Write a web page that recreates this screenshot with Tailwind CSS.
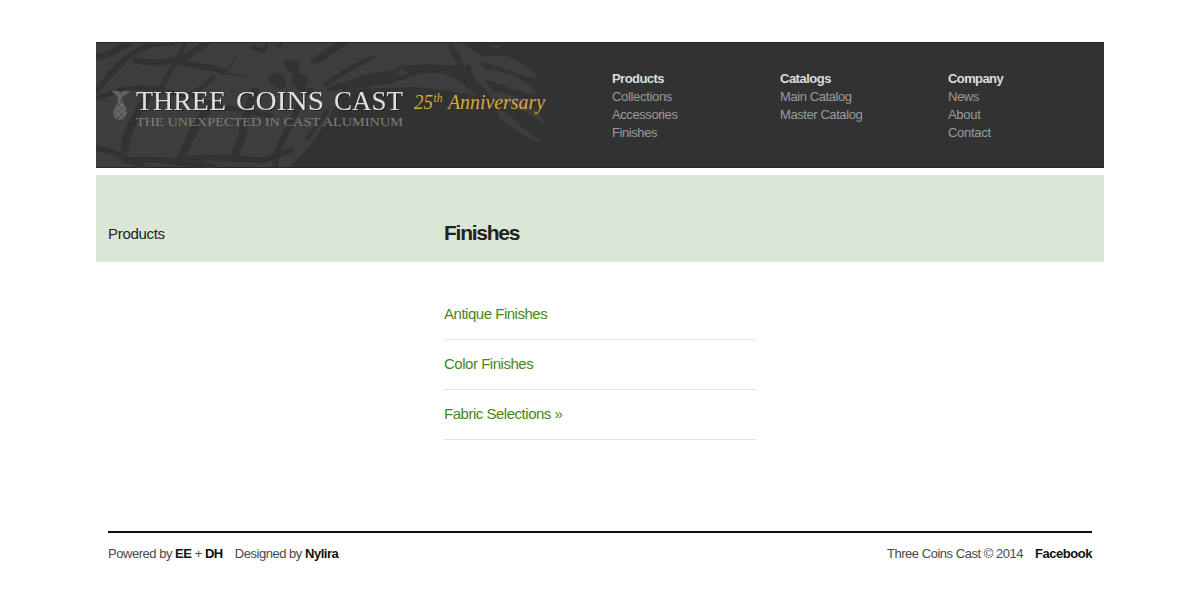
<!DOCTYPE html>
<html lang="en">
<head>
<meta charset="utf-8">
<title>Finishes - Three Coins Cast</title>
<script src="https://cdn.jsdelivr.net/npm/@tailwindcss/browser@4"></script>
</head>
<body class="h-[600px] overflow-hidden bg-white font-['Liberation_Sans',Arial,sans-serif] text-[#222]">
<div class="mx-auto w-[1008px] pt-[42px]">
  <header class="flex h-[126px] border-y border-[#272727] bg-[#323232]">
    <a href="#" class="-mt-px block h-[126px] w-[516px] shrink-0">
      <svg viewBox="0 0 516 126" class="block h-[126px] w-[516px]" font-family="'Liberation Serif', serif">
        <g fill="#3d3d3d">
          <path d="M0 1H240L262 20L242 34L247 46L236 70L224 90L212 106L194 125H0Z"/>
          <path d="M205 1H354L365 12L372 20L366 31L350 27L330 26L308 28L284 34L254 43L238 48L226 30Z"/>
          <path d="M254 48L298 41L310 34L328 31L345 31L358 36L372 46L382 54L350 48L320 45L288 46Z"/>
          <path d="M356 1H366L377 9L388 14H398L411 14L424 20L435 27L443 37L428 34L411 28L394 22L383 20L389 27L402 29L420 34L435 45L442 53L430 51L411 45L388 37L397 50L402 61L388 52L380 41L374 24Z"/>
          <path d="M389 3L405 4L400 6ZM391 49L407 51L427 57L438 66L452 83L444 79L432 71L413 64ZM400 67L412 72L427 86L440 96L446 98L443 101L435 98L417 86L405 78Z"/>
        </g>
        <g fill="none" stroke="#323232">
          <path stroke-width="6" d="M0 15Q14 13 24 6L36 1M0 50Q20 23 38 11T78 1M37 18Q60 24 87 16L112 1M81 18Q95 24 111 25Q124 27 129 31"/>
          <path stroke-width="5" d="M0 57Q29 44 49 46T92 55M92 53Q105 48 119 34M96 54Q119 65 139 67T177 75M62 50L82 17L89 1"/>
          <path stroke-width="8" d="M55 50Q42 66 31 94L28 111M117 61Q96 85 84 119M160 46Q150 68 146 95L136 120"/>
          <path stroke-width="6" d="M0 106Q17 109 30 117L49 125M28 119Q50 116 73 119T120 125M81 119Q108 114 133 116T168 118L198 107M206 58Q194 82 181 110L179 125"/>
          <path stroke-width="1.6" d="M130 33L140 14M130 32L151 34"/>
          <path stroke-width="4" d="M228 43Q247 30 280 14M155 5L167 9L171 3M180 4L186 1M210 98L232 68"/>
        </g>
        <g fill="#323232">
          <path d="M172 36Q179 28 186 33Q190 37 190 46L185 47Q175 45 172 36ZM187 20L191 17L194 19L202 18Q206 25 201 30L211 34Q213 42 208 46L218 47L219 52Q207 53 202 48L195 40L198 34L191 28Z"/>
          <path d="M214 22L216 17L230 7L240 1H253L237 11L229 19ZM230 40L245 29L264 19L276 14L266 22L248 32L234 43Z"/>
          <path d="M231 46L252 39L276 31L298 28L302 24L330 22L352 23L366 27L373 34L358 33L345 31L328 30L318 34L306 38L288 38L262 43L240 48L231 50Z"/>
          <path d="M353 1L363 11L368 24L377 36L391 49L399 64L385 53L370 34L356 26L361 20L354 10Z"/>
        </g>
        <path d="M299 31L308 25L306 29L314 31L303 35L305 32Z" fill="#3d3d3d"/>
        <g fill="none" stroke="#777" stroke-width="1">
          <path fill="#585858" stroke="none" d="M16 49L20 50L19 48L25 50L31 48L29 51L34 49L30 53L26 55L27 60Q31 66 31 71Q29 78 23.500 78Q17 77 17 71Q17 66 22 60L21 55Z"/>
          <path stroke-width=".9" d="M16 49L22 51L24 55L27 51L34 49M23 56V60M20 64L30 73M18 68L27 77M23 61L30 67M27 62L18 71M30 66L19 75M31 70L23 78"/>
        </g>
        <g class="drop-shadow-[1px_1px_0px_#222]" fill="#e0e0e0" font-size="26.500">
          <text x="40" y="68" textLength="90" lengthAdjust="spacingAndGlyphs">THREE</text>
          <text x="140" y="68" textLength="88" lengthAdjust="spacingAndGlyphs">COINS</text>
          <text x="238" y="68" textLength="69" lengthAdjust="spacingAndGlyphs">CAST</text>
        </g>
        <text x="40" y="84" font-size="13.500" fill="#808080" textLength="267" lengthAdjust="spacingAndGlyphs">THE UNEXPECTED IN CAST ALUMINUM</text>
        <g fill="#d8ab35" font-style="italic">
          <text x="318" y="67" font-size="21" textLength="19" lengthAdjust="spacingAndGlyphs">25</text>
          <text x="337.500" y="60" font-size="12" textLength="9" lengthAdjust="spacingAndGlyphs">th</text>
          <text x="352" y="67" font-size="21" textLength="97" lengthAdjust="spacingAndGlyphs">Anniversary</text>
        </g>
      </svg>
    </a>
    <nav class="grid grid-cols-[168px_168px_156px] pt-[27px] text-[13px] leading-[18px] tracking-[-0.42px] text-[#9b9b9b]">
      <ul>
        <li class="font-bold tracking-[-0.55px] text-[#ddd]">Products</li>
        <li class="tracking-[-0.33px]">Collections</li><li>Accessories</li><li>Finishes</li>
      </ul>
      <ul>
        <li class="font-bold tracking-[-0.5px] text-[#ddd]">Catalogs</li>
        <li>Main Catalog</li><li>Master Catalog</li>
      </ul>
      <ul>
        <li class="font-bold tracking-[-0.6px] text-[#ddd]">Company</li>
        <li>News</li><li class="tracking-[-0.3px]">About</li><li class="tracking-[-0.3px]">Contact</li>
      </ul>
    </nav>
  </header>
  <section class="mt-[7px] flex h-[87px] items-start bg-[#dce6d6] px-3">
    <p class="w-[336px] pt-[49px] text-[15px] leading-5 tracking-[-0.3px]">Products</p>
    <h1 class="pt-[44px] text-[21px] font-bold leading-7 tracking-[-1.25px]">Finishes</h1>
  </section>
  <ul class="ml-[348px] mt-[28px] w-[312px] text-[15px] leading-5 tracking-[-0.48px] text-[#478718]">
    <li class="h-[50px] border-b border-[#e4e4dd] pt-[14px]">Antique Finishes</li>
    <li class="h-[50px] border-b border-[#e4e4dd] pt-[14px]">Color Finishes</li>
    <li class="h-[50px] border-b border-[#e4e4dd] pt-[14px]">Fabric Selections »</li>
  </ul>
  <footer class="mx-3 mt-[91px] flex justify-between border-t-2 border-[#111] pt-[12px] text-[13px] leading-[18px] tracking-[-0.47px] text-[#4a4a4a]">
    <div class="flex gap-3">
      <p>Powered by <b class="text-[#111]">EE</b> + <b class="text-[#111]">DH</b></p>
      <p>Designed by <b class="text-[#111]">Nylira</b></p>
    </div>
    <div class="flex gap-3">
      <p>Three Coins Cast © 2014</p>
      <b class="text-[#111]">Facebook</b>
    </div>
  </footer>
</div>
</body>
</html>
